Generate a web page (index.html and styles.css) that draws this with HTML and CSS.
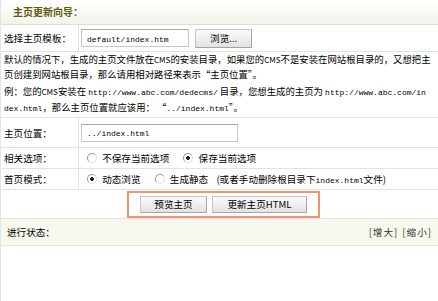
FILE: index.html
```html
<!DOCTYPE html>
<html lang="zh-CN">
<head>
    <meta charset="UTF-8">
    <title>主页更新向导</title>
    <link rel="stylesheet" href="styles.css">
</head>
<body>
    <div class="panel">
        <div class="panel-head">主页更新向导：</div>
        <table class="form">
            <tr class="row-tpl">
                <td class="label">选择主页模板：</td>
                <td class="field">
                    <input type="text" class="text tpl" value="default/index.htm">
                    <button class="btn browse">浏览...</button>
                </td>
            </tr>
            <tr>
                <td colspan="2" class="note">
                    <p>默认的情况下，生成的主页文件放在<span class="en">CMS</span>的安装目录，如果您的<span class="en">CMS</span>不是安装在网站根目录的，又想把主<br>页创建到网站根目录，那么请用相对路径来表示“主页位置”。</p>
                    <p>例：您的<span class="en">CMS</span>安装在 <span class="mono">http://www.abc.com/dedecms/</span> 目录，您想生成的主页为 <span class="mono">http://www.abc.com/in<br>dex.html</span>，那么主页位置就应该用： “<span class="mono">../index.html</span>”。</p>
                </td>
            </tr>
            <tr class="row-pos">
                <td class="label">主页位置：</td>
                <td class="field">
                    <input type="text" class="text pos" value="../index.html">
                </td>
            </tr>
            <tr class="row-opt">
                <td class="label">相关选项：</td>
                <td class="field">
                    <label class="choice"><input type="radio" name="save"> 不保存当前选项</label>
                    <label class="choice"><input type="radio" name="save" checked> 保存当前选项</label>
                </td>
            </tr>
            <tr class="row-opt">
                <td class="label">首页模式：</td>
                <td class="field">
                    <label class="choice"><input type="radio" name="mode" checked> 动态浏览</label>
                    <label class="choice"><input type="radio" name="mode"> 生成静态</label>
                    <span class="hint">(或者手动删除根目录下<span class="mono">index.html</span>文件)</span>
                </td>
            </tr>
            <tr>
                <td colspan="2" class="actions">
                    <div class="action-box">
                        <button class="btn preview">预览主页</button>
                        <button class="btn update">更新主页HTML</button>
                    </div>
                </td>
            </tr>
        </table>
        <div class="status-bar">
            <span>进行状态：</span>
            <span class="zoom-links"><span>[增大]</span><span>[缩小]</span></span>
        </div>
        <div class="status-body"></div>
    </div>
</body>
</html>
```

FILE: styles.css
```css
body {
    margin: 0;
    padding: 0;
    background: #fff;
    color: #000;
    font-family: "Noto Sans CJK SC", "Noto Sans", sans-serif;
    font-size: 9.6px;
}

.panel {
    border-left: 1px solid #e4e4e4;
    height: 301px;
    box-sizing: border-box;
}

.panel-head {
    height: 25px;
    line-height: 24px;
    padding-left: 12px;
    background: linear-gradient(#ffffff, #f4f4ec);
    border-bottom: 1px solid #dcdcd4;
    color: #5c5c10;
    font-weight: bold;
    font-size: 10px;
    box-sizing: border-box;
}

.form {
    width: 100%;
    border-collapse: collapse;
}

.form td {
    border-bottom: 1px solid #e2e2e2;
    padding: 0;
    vertical-align: middle;
}

.form .label {
    width: 74px;
    padding-left: 3px;
    border-right: 1px solid #e2e2e2;
    white-space: nowrap;
}

.form .field {
    padding-left: 2px;
}

.row-tpl td {
    height: 26px;
}

.row-pos td {
    height: 29px;
}

.row-opt td {
    height: 20px;
}

.text {
    font-family: "Liberation Mono", monospace;
    font-size: 8px;
    height: 18px;
    box-sizing: border-box;
    border: 1px solid #c8c8c8;
    border-top-color: #a8a8a8;
    padding: 2px 5px 0;
    margin: 0;
    vertical-align: middle;
}

.tpl {
    width: 108px;
}

.pos {
    width: 157px;
}

.btn {
    font-family: "Noto Sans CJK SC", sans-serif;
    font-size: 9.6px;
    height: 17px;
    padding: 0;
    border: 1px solid #c4c4c4;
    border-bottom-color: #a4a4a4;
    border-right-color: #a4a4a4;
    background: linear-gradient(#fbfbfb, #e2e2e2);
    color: #000;
    border-radius: 1px;
    vertical-align: middle;
}

.browse {
    width: 57px;
    margin-left: 4px;
    height: 19px;
}

.note {
    padding: 0 2px 1px 3px !important;
    font-size: 9.4px;
    line-height: 14px;
    white-space: nowrap;
}

.note p {
    margin: 0;
}

.note p + p {
    margin-top: 3px;
}

.mono {
    font-family: "Liberation Mono", monospace;
    font-size: 8px;
}

.en {
    font-size: 8px;
}

.choice {
    margin-left: 6px;
    margin-right: 6px;
}

.choice input {
    appearance: none;
    -webkit-appearance: none;
    width: 10px;
    height: 10px;
    margin: 0 3px 0 0;
    border: 1px solid #9a9a9a;
    border-right-color: #dcdcdc;
    border-bottom-color: #dcdcdc;
    border-radius: 50%;
    background: #fff;
    vertical-align: -1px;
}

.choice input:checked {
    background: radial-gradient(circle, #222 0 1.6px, #fff 2.2px);
}

.actions {
    height: 28px;
    text-align: center;
}

.action-box {
    display: inline-flex;
    gap: 5px;
    padding: 3px 11px;
    border: 2px solid #f0956a;
    margin-left: 8px;
}

.preview {
    width: 67px;
}

.update {
    width: 95px;
}

.status-bar {
    display: flex;
    justify-content: space-between;
    height: 27px;
    line-height: 26px;
    padding: 0 6px;
    background: #f8f8ee;
    border-bottom: 1px solid #e6e6dc;
    box-sizing: border-box;
}

.zoom-links {
    display: flex;
    gap: 4px;
    color: #333;
    letter-spacing: 1px;
}
```
